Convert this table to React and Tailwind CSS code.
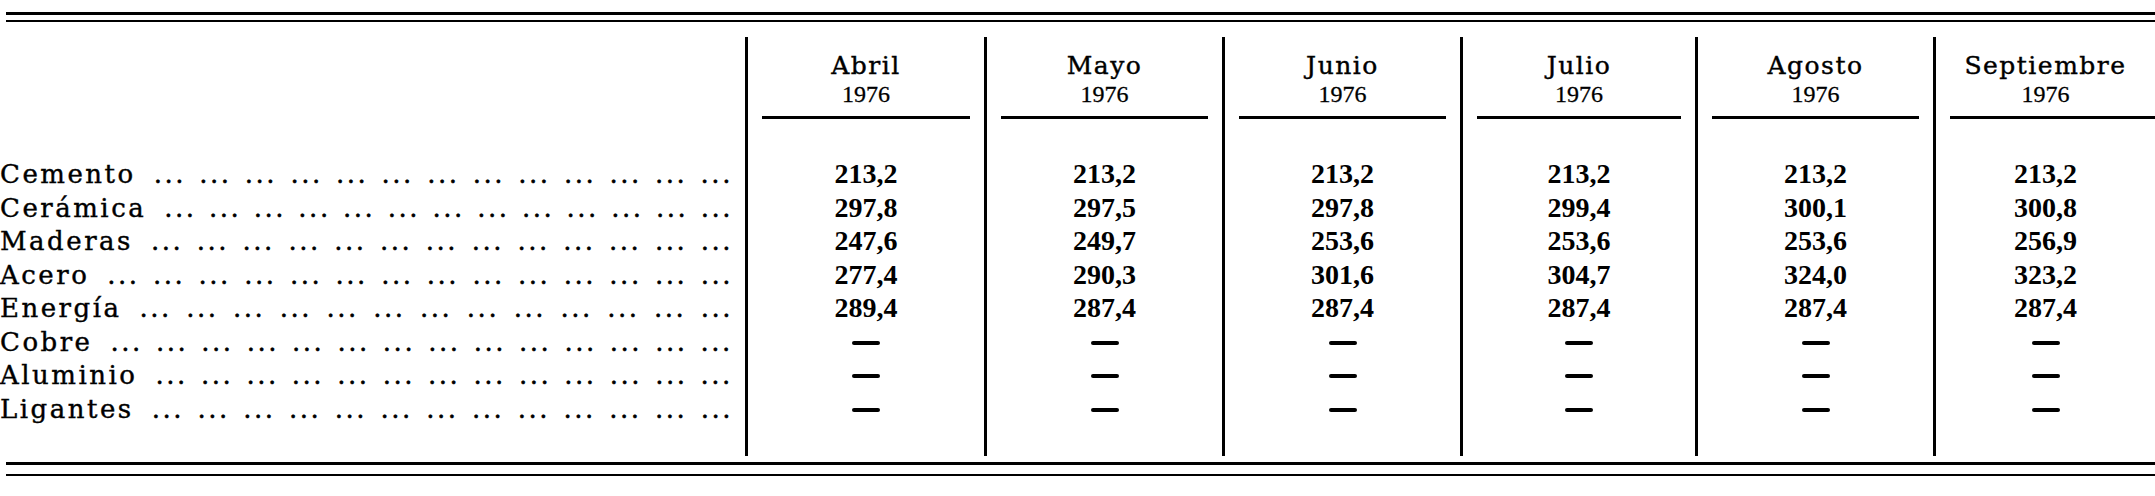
import React from 'react';

const rows = [
  { label: 'Cemento', dots: 13 },
  { label: 'Cerámica', dots: 13 },
  { label: 'Maderas', dots: 13 },
  { label: 'Acero', dots: 14 },
  { label: 'Energía', dots: 13 },
  { label: 'Cobre', dots: 14 },
  { label: 'Aluminio', dots: 13 },
  { label: 'Ligantes', dots: 13 },
];

const columns = [
  { month: 'Abril', width: 'w-[239px]', values: ['213,2', '297,8', '247,6', '277,4', '289,4'] },
  { month: 'Mayo', width: 'w-[238px]', values: ['213,2', '297,5', '249,7', '290,3', '287,4'] },
  { month: 'Junio', width: 'w-[238px]', values: ['213,2', '297,8', '253,6', '301,6', '287,4'] },
  { month: 'Julio', width: 'w-[235px]', values: ['213,2', '299,4', '253,6', '304,7', '287,4'] },
  { month: 'Agosto', width: 'w-[238px]', values: ['213,2', '300,1', '253,6', '324,0', '287,4'] },
  { month: 'Septiembre', width: 'w-[222px]', values: ['213,2', '300,8', '256,9', '323,2', '287,4'], last: true },
];

const Leader = ({ count }) => (
  <div className="flex-1 min-w-0 ml-[18px] flex justify-between">
    {Array.from({ length: count }).map((_, i) => (
      <span key={i} className="shrink-0 tracking-[2.5px]">...</span>
    ))}
  </div>
);

const DataColumn = ({ col }) => {
  const cells = [...col.values, null, null, null];
  return (
    <div className={`${col.width} shrink-0 border-l-[3px] border-black flex flex-col`}>
      {/* header */}
      <div className="pt-[16px] text-center">
        <div className="text-[25px] leading-[25px] tracking-[1.5px] [-webkit-text-stroke:0.4px_black]">{col.month}</div>
        <div className="mt-[4px] text-[24px] leading-[24px] font-['Liberation_Serif',serif] [-webkit-text-stroke:0.3px_black]">1976</div>
      </div>
      <div className={`mt-[10px] border-t-[3px] border-black ${col.last ? 'ml-[14px]' : 'mx-[14px]'}`} />

      {/* values */}
      <div className="mt-[38px]">
        {cells.map((v, i) =>
          v ? (
            <div key={i} className="h-[33.5px] leading-[33.5px] text-center text-[28px] font-bold font-['Liberation_Serif',serif]">
              {v}
            </div>
          ) : (
            <div key={i} className="h-[33.5px] pt-[16px] flex justify-center">
              <div className="w-[28px] h-[4px] bg-black rounded-full" />
            </div>
          )
        )}
      </div>
    </div>
  );
};

export default function App() {
  return (
    <div className="w-[2155px] h-[496px] bg-white text-black overflow-hidden pt-[12px] font-['DejaVu_Serif','Liberation_Serif',serif]">
      {/* top double rule */}
      <div className="ml-[6px] border-t-[3px] border-black" />
      <div className="ml-[6px] mt-[5px] border-t-2 border-black" />

      <div className="mt-[15px] flex h-[419px]">
        {/* labels */}
        <div className="w-[745px] shrink-0 pt-[121px] pr-[12px]">
          {rows.map((r) => (
            <div key={r.label} className="h-[33.5px] leading-[33.5px] text-[26px] flex items-baseline whitespace-nowrap [-webkit-text-stroke:0.4px_black]">
              <span className="shrink-0 tracking-[2.5px]">{r.label}</span>
              <Leader count={r.dots} />
            </div>
          ))}
        </div>

        {columns.map((c) => (
          <DataColumn key={c.month} col={c} />
        ))}
      </div>

      {/* bottom double rule */}
      <div className="ml-[6px] mt-[6px] border-t-[3px] border-black" />
      <div className="ml-[6px] mt-[9px] border-t-2 border-black" />
    </div>
  );
}
